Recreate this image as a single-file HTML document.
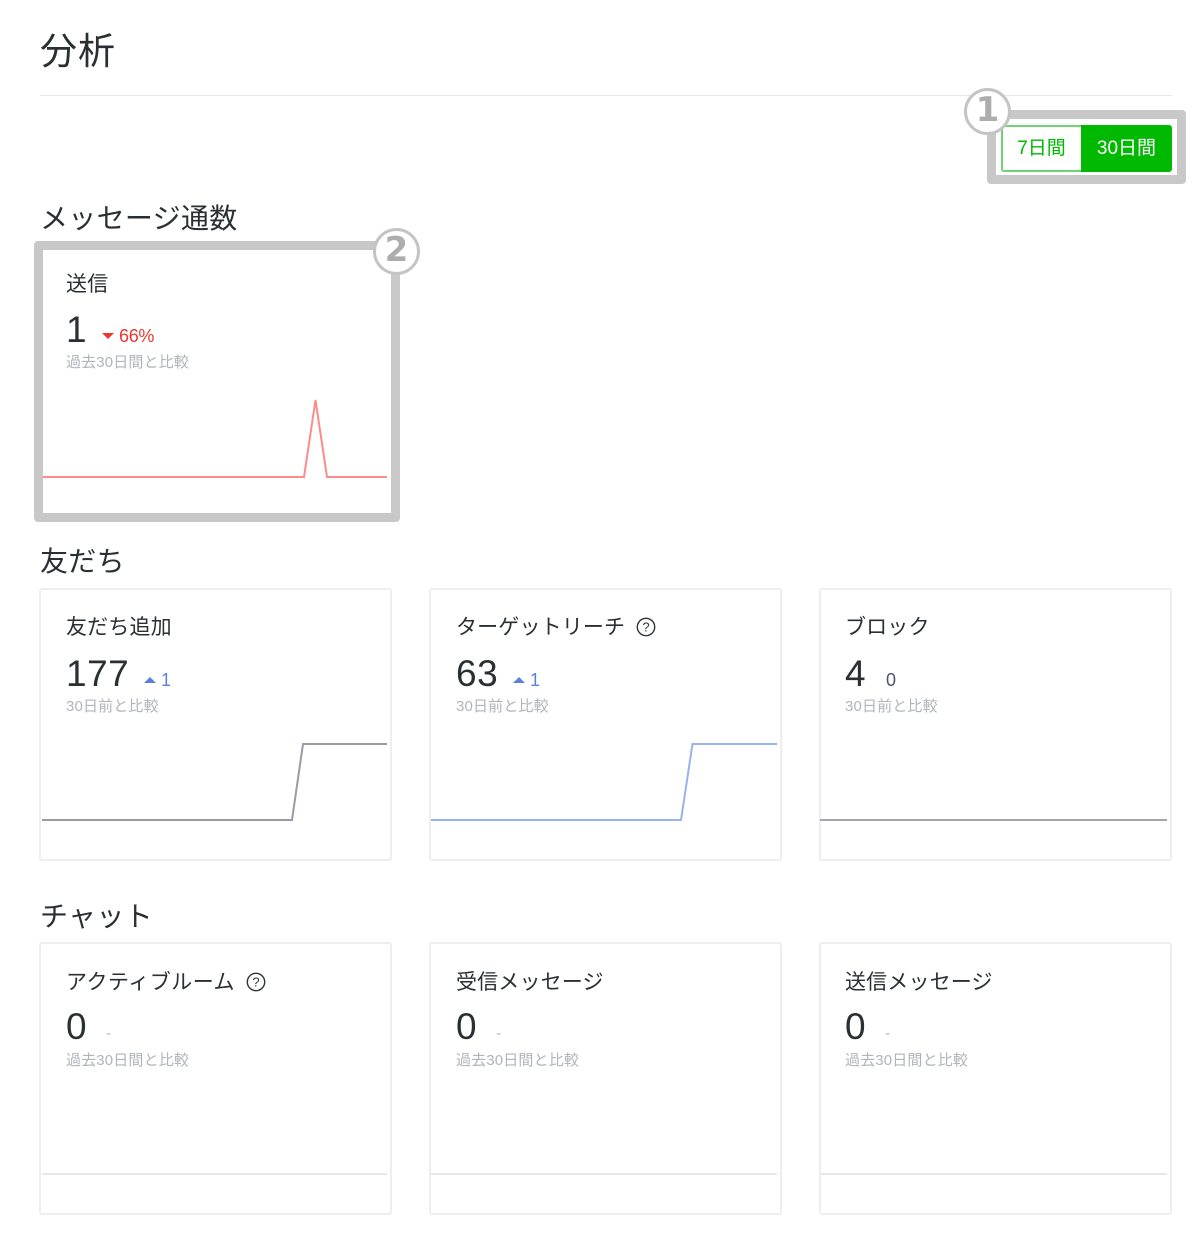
<!DOCTYPE html>
<html lang="ja">
<head>
<meta charset="utf-8">
<title>分析</title>
<style>
html,body{margin:0;padding:0;background:#fff}
body{width:1200px;height:1251px;position:relative;overflow:hidden;font-family:"Liberation Sans","Noto Sans CJK JP",sans-serif;color:#2a2f33}
.t{position:absolute;white-space:nowrap;line-height:40px;height:40px}
.h1{font-size:37px;left:40px;top:32px;letter-spacing:1px}
.h2{font-size:28px;left:40px;letter-spacing:.3px}
.title{font-size:21px;letter-spacing:.15px}
.num{font-size:37px;letter-spacing:.5px}
.sub{font-size:15px;color:#b0b5bb;letter-spacing:.15px}
.delta{font-size:18px;letter-spacing:-.3px}
.card{position:absolute;box-sizing:border-box;width:353px;height:273px;border:2px solid #eeeef0;border-radius:3px;background:#fff}
.box{position:absolute;box-sizing:border-box;border:9px solid #c8c8c8;border-radius:4px;background:#fff}
.badge{position:absolute;box-sizing:border-box;width:47px;height:47px;border-radius:50%;border:3px solid #c4c4c4;background:#fff;color:#adadad;font-family:"DejaVu Sans",sans-serif;font-weight:bold;font-size:34px;line-height:39px;text-align:center}
.btn{position:absolute;box-sizing:border-box;top:125px;height:47px;font-size:19px;line-height:44px;text-align:center}
svg{position:absolute;left:0;top:0}
</style>
</head>
<body>
<div class="t h1">分析</div>
<div style="position:absolute;left:40px;top:95px;width:1132px;height:1px;background:#e9e9e9"></div>

<div class="box" style="left:987px;top:110px;width:199px;height:74px"></div>
<div class="btn" style="left:1001px;width:81px;border:2px solid #6ed277;border-right:0;border-radius:3px 0 0 3px;color:#00b900;background:#fff;padding-right:2px">7日間</div>
<div class="btn" style="left:1081px;width:91px;border:2px solid #00b900;border-radius:0 3px 3px 0;background:#00b900;color:#fff">30日間</div>
<div class="badge" style="left:964px;top:88px">1</div>

<div class="t h2" style="top:199px">メッセージ通数</div>
<div class="box" style="left:34px;top:241px;width:366px;height:281px"></div>
<div class="badge" style="left:373px;top:228px">2</div>

<div class="t h2" style="top:542px">友だち</div>
<div class="t h2" style="top:897px">チャット</div>

<div class="card" style="left:39px;top:588px"></div>
<div class="card" style="left:429px;top:588px"></div>
<div class="card" style="left:819px;top:588px"></div>
<div class="card" style="left:39px;top:942px"></div>
<div class="card" style="left:429px;top:942px"></div>
<div class="card" style="left:819px;top:942px"></div>

<svg width="1200" height="1251" viewBox="0 0 1200 1251" fill="none">
  <g stroke-width="2" stroke-linejoin="miter">
    <polyline points="43,477 304,477 315.500,400 327,477 387,477" stroke="#ff8a8a"/>
    <polyline points="42,820 292,820 303,744 387,744" stroke="#9a9aa8"/>
    <polyline points="431,820 681,820 692.500,744 777,744" stroke="#98b2ee"/>
    <polyline points="820,820 1167,820" stroke="#a3a3b1"/>
    <polyline points="42,1174 387,1174" stroke="#e6e9ec"/>
    <polyline points="431,1174 777,1174" stroke="#e6e9ec"/>
    <polyline points="821,1174 1167,1174" stroke="#e6e9ec"/>
  </g>
  <path d="M102 333h12l-6 6z" fill="#e8392f"/>
  <path d="M144 683h12l-6-6z" fill="#5b7fdd"/>
  <path d="M513 683h12l-6-6z" fill="#5b7fdd"/>
  <circle cx="646" cy="627" r="8.700" stroke="#2f3438" stroke-width="1.400"/>
  <circle cx="256" cy="982" r="8.700" stroke="#2f3438" stroke-width="1.400"/>
  <text x="646" y="631.500" font-size="13" text-anchor="middle" fill="#2f3438" font-family="Liberation Sans, sans-serif">?</text>
  <text x="256" y="986.500" font-size="13" text-anchor="middle" fill="#2f3438" font-family="Liberation Sans, sans-serif">?</text>
</svg>

<div class="t title" style="left:66px;top:265px">送信</div>
<div class="t num" style="left:66px;top:310px">1</div>
<div class="t delta" style="left:119px;top:316px;color:#e8392f">66%</div>
<div class="t sub" style="left:66px;top:343px">過去30日間と比較</div>

<div class="t title" style="left:66px;top:608px">友だち追加</div>
<div class="t num" style="left:66px;top:654px">177</div>
<div class="t delta" style="left:161px;top:660px;color:#5b7fdd">1</div>
<div class="t sub" style="left:66px;top:687px">30日前と比較</div>

<div class="t title" style="left:456px;top:608px">ターゲットリーチ</div>
<div class="t num" style="left:456px;top:654px">63</div>
<div class="t delta" style="left:530px;top:660px;color:#5b7fdd">1</div>
<div class="t sub" style="left:456px;top:687px">30日前と比較</div>

<div class="t title" style="left:845px;top:608px">ブロック</div>
<div class="t num" style="left:845px;top:654px">4</div>
<div class="t delta" style="left:886px;top:660px;color:#4a5573">0</div>
<div class="t sub" style="left:845px;top:687px">30日前と比較</div>

<div class="t title" style="left:66px;top:963px;letter-spacing:.5px">アクティブルーム</div>
<div class="t num" style="left:66px;top:1007px">0</div>
<div class="t sub" style="left:106px;top:1014px">-</div>
<div class="t sub" style="left:66px;top:1041px">過去30日間と比較</div>

<div class="t title" style="left:456px;top:963px">受信メッセージ</div>
<div class="t num" style="left:456px;top:1007px">0</div>
<div class="t sub" style="left:496px;top:1014px">-</div>
<div class="t sub" style="left:456px;top:1041px">過去30日間と比較</div>

<div class="t title" style="left:845px;top:963px">送信メッセージ</div>
<div class="t num" style="left:845px;top:1007px">0</div>
<div class="t sub" style="left:885px;top:1014px">-</div>
<div class="t sub" style="left:845px;top:1041px">過去30日間と比較</div>
</body>
</html>
